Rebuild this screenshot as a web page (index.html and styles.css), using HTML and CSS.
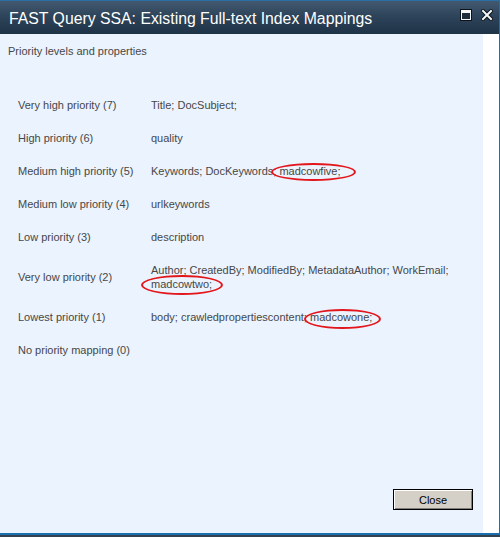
FILE: index.html
```html
<!DOCTYPE html>
<html lang="en">
<head>
<meta charset="utf-8">
<title>FAST Query SSA: Existing Full-text Index Mappings</title>
<link rel="stylesheet" href="styles.css">
</head>
<body>
<div class="frame">
  <div class="dialog">
    <div class="titlebar">
      <div class="title">FAST Query SSA: Existing Full-text Index Mappings</div>
      <div class="controls">
        <svg class="ctl" width="12" height="12" viewBox="0 0 12 12" aria-label="Maximize">
          <rect x="0.5" y="0.5" width="11" height="11" fill="#1c2c3d" stroke="#0b121a"/>
          <rect x="1.5" y="1.5" width="9" height="9" fill="none" stroke="#f4f6f8"/>
          <rect x="1" y="1" width="10" height="3" fill="#f4f6f8"/>
        </svg>
        <svg class="ctl" width="12" height="12" viewBox="0 0 12 12" aria-label="Close">
          <path d="M2 2 L10 10 M10 2 L2 10" stroke="#0b121a" stroke-width="4" stroke-linecap="square"/>
          <path d="M2 2 L10 10 M10 2 L2 10" stroke="#f4f6f8" stroke-width="2" stroke-linecap="square"/>
        </svg>
      </div>
    </div>
    <div class="body">
      <div class="content">
        <div class="heading">Priority levels and properties</div>
        <div class="mappings">
          <div class="lvl">Very high priority (7)</div><div class="props">Title; DocSubject;</div>
          <div class="lvl">High priority (6)</div><div class="props">quality</div>
          <div class="lvl">Medium high priority (5)</div><div class="props">Keywords; DocKeywords; <span class="mark mark-five">madcowfive;</span></div>
          <div class="lvl">Medium low priority (4)</div><div class="props">urlkeywords</div>
          <div class="lvl">Low priority (3)</div><div class="props">description</div>
          <div class="lvl">Very low priority (2)</div><div class="props">Author; CreatedBy; ModifiedBy; MetadataAuthor; WorkEmail; <span class="mark mark-two">madcowtwo;</span></div>
          <div class="lvl">Lowest priority (1)</div><div class="props">body; crawledpropertiescontent; <span class="mark mark-one">madcowone;</span></div>
          <div class="lvl">No priority mapping (0)</div><div class="props"></div>
        </div>
        <div class="footer">
          <button class="btn" type="button">Close</button>
        </div>
      </div>
      <div class="gutter"></div>
    </div>
  </div>
</div>
</body>
</html>
```
FILE: styles.css
```css
html, body {
  margin: 0;
  padding: 0;
  background: #ffffff;
}

body {
  font-family: "Liberation Sans", Arial, sans-serif;
  font-size: 11px;
  line-height: 14px;
  color: #474747;
}

.frame {
  width: 500px;
  height: 537px;
  box-sizing: border-box;
  border-bottom: 2px solid #34424f;
}

.dialog {
  height: 100%;
  box-sizing: border-box;
  display: flex;
  flex-direction: column;
  border-top: 1px solid #2b6fa6;
  border-right: 1px solid #1c6fae;
  border-bottom: 2px solid #1c6fae;
}

.titlebar {
  height: 33px;
  flex: none;
  display: flex;
  align-items: flex-start;
  justify-content: space-between;
  background: linear-gradient(#43596f, #2e445a 45%, #1f3347);
  color: #ffffff;
}

.title {
  font-size: 15.8px;
  line-height: 18px;
  padding: 9px 0 0 9px;
  white-space: nowrap;
}

.controls {
  display: flex;
  gap: 9px;
  padding: 8px 6px 0 0;
}

.ctl {
  display: block;
}

.body {
  flex: 1;
  display: flex;
  min-height: 0;
}

.content {
  width: 483px;
  flex: none;
  background: #ebf3fe;
  box-sizing: border-box;
  padding: 10px 10px 23px 8px;
  display: flex;
  flex-direction: column;
}

.gutter {
  flex: 1;
  background: #ffffff;
}

.heading {
  height: 14px;
}

.mappings {
  display: grid;
  grid-template-columns: 133px 310px;
  align-items: center;
  margin: 30px 0 0 10px;
}

.lvl,
.props {
  padding: 10px 0 9px 0;
  min-height: 14px;
}

.lvl {
  white-space: nowrap;
}

.mark {
  position: relative;
  white-space: nowrap;
}

.mark::after {
  content: "";
  position: absolute;
  left: -8px;
  right: -12px;
  top: -3px;
  bottom: -5px;
  border: 2px solid #e3161c;
  border-radius: 50%;
}

.mark-five::after {
  top: -2px;
  bottom: -4px;
  right: -15px;
}

.mark-two::after {
  left: -10px;
  right: -11px;
}

.mark-one::after {
  left: -6px;
  right: -9px;
  top: -2px;
  bottom: -6px;
}

.footer {
  margin-top: auto;
  display: flex;
  justify-content: flex-end;
}

.btn {
  width: 80px;
  height: 21px;
  box-sizing: border-box;
  margin: 0;
  padding: 0;
  border: 1px solid #000000;
  background: #d4d0c8;
  box-shadow: inset 1px 1px 0 #ffffff, inset -1px -1px 0 #808080;
  font-family: "Liberation Sans", Arial, sans-serif;
  font-size: 11px;
  color: #000000;
}
```
